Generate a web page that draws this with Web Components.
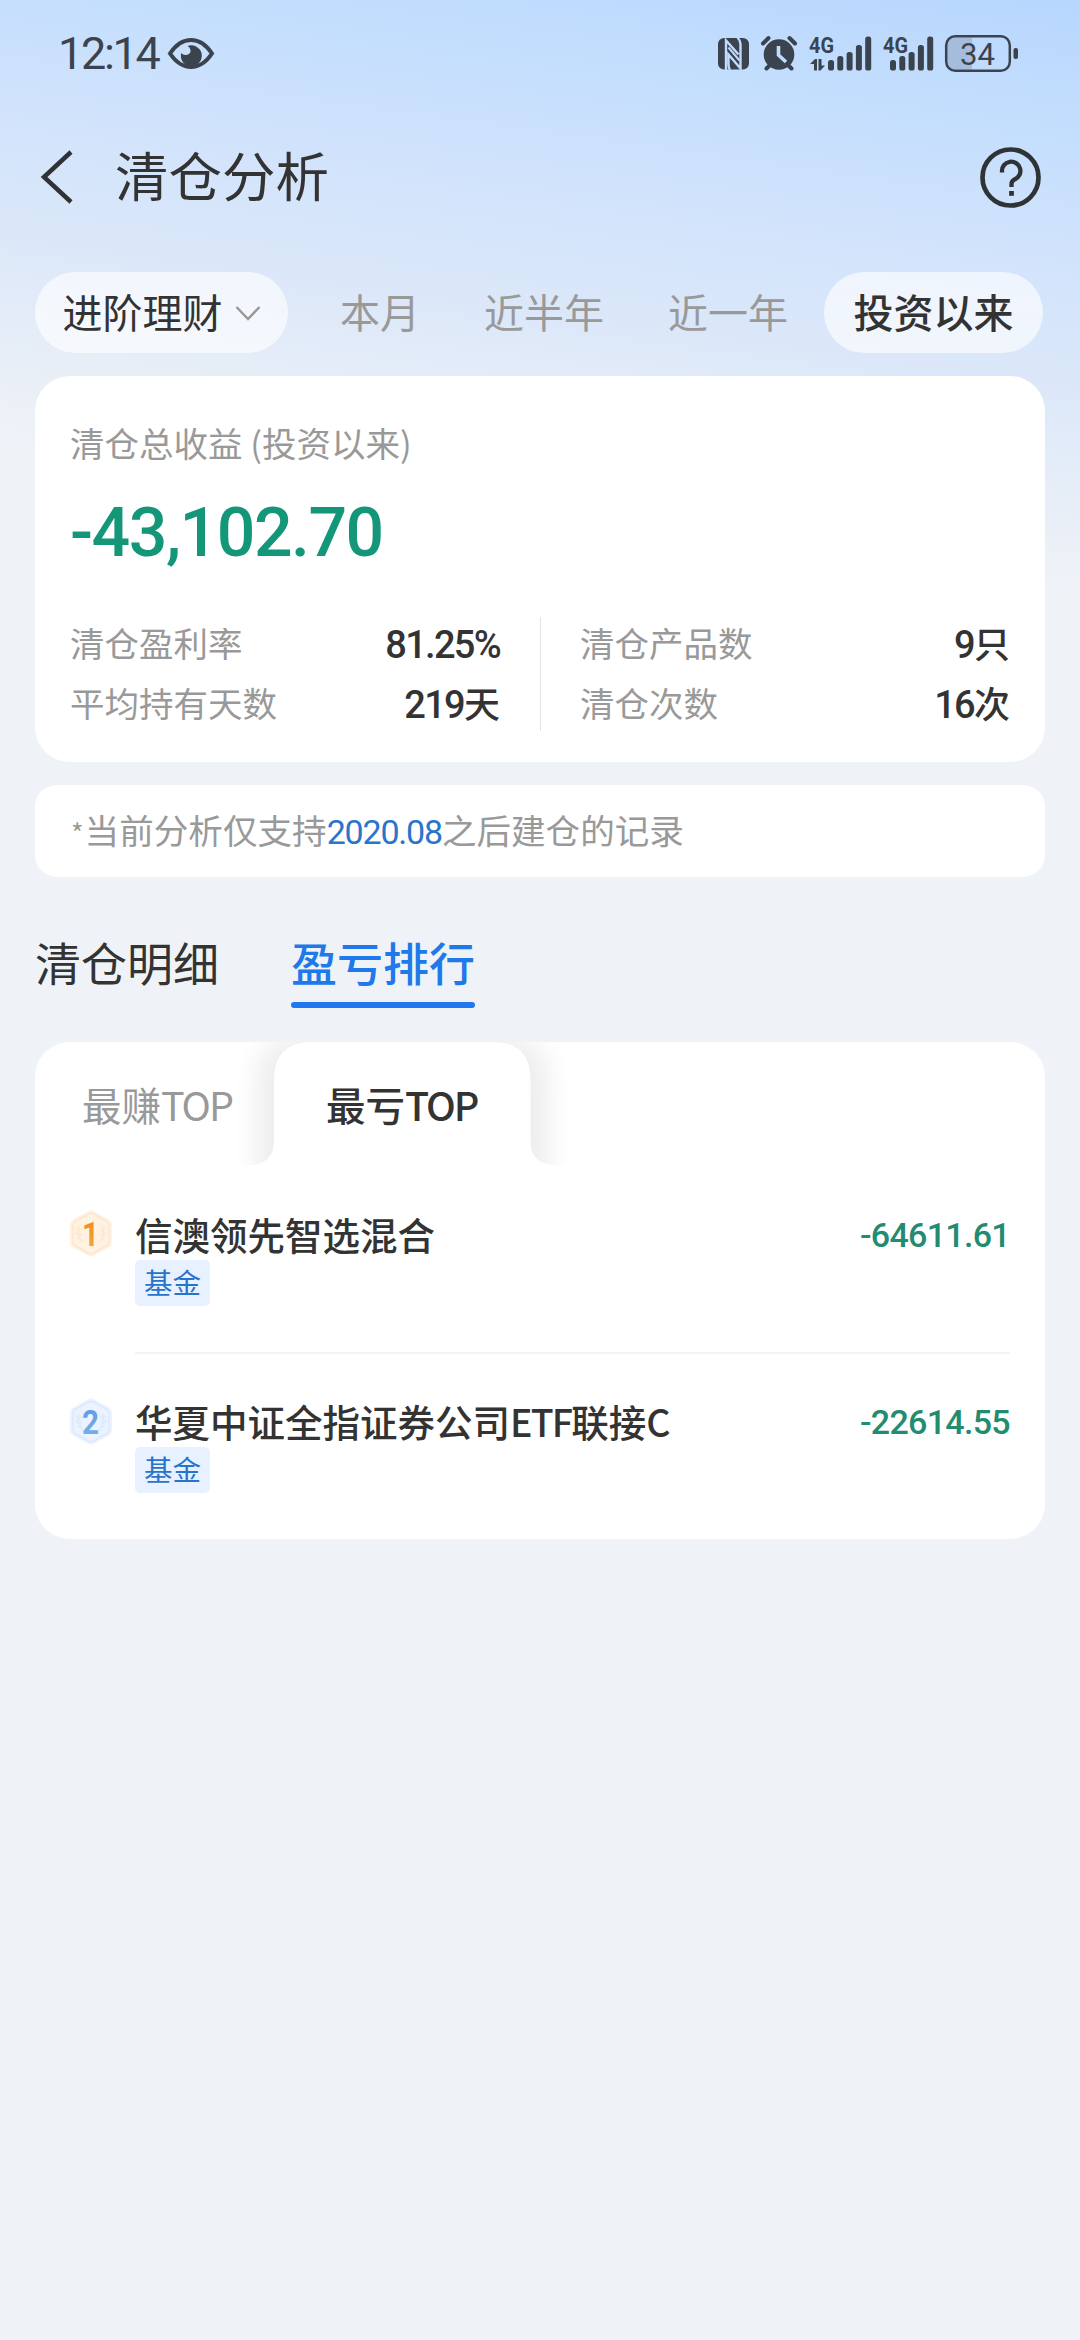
<!DOCTYPE html>
<html lang="zh-CN">
<head>
<meta charset="utf-8">
<title>清仓分析</title>
<style>
  html, body { margin: 0; padding: 0; }
  body { width: 1080px; height: 2340px; overflow: hidden; background: #eff3f8; }
</style>
</head>
<body>
<clearance-page></clearance-page>
<script>
const define = (name, css, html) => customElements.define(name, class extends HTMLElement {
  constructor() {
    super();
    const t = document.createElement('template');
    t.innerHTML = `<style>*{box-sizing:border-box}${css}</style>${typeof html === 'function' ? html(this) : html}`;
    this.attachShadow({ mode: 'open' }).append(t.content.cloneNode(true));
  }
});

const bars = (x) => [60, 56, 52, 45, 36.5].map((top, i) =>
  `<rect x="${x + i * 9.3}" y="${top}" width="6" height="${70.5 - top}" rx="2.6"/>`).join('');

define('status-bar', `
  :host{display:flex;height:108px;justify-content:space-between;color:#3b444e}
  .l{display:flex;padding-left:58px;align-items:center}
  .time{font:400 45px/60px Roboto,sans-serif;letter-spacing:-2.3px;width:109px;white-space:nowrap}
  svg{display:block;fill:currentColor}
  text{font-family:Roboto,sans-serif}`, `
  <div class="l"><span class="time">12:14</span>
    <svg width="48" height="108" viewBox="167 0 48 108">
      <path d="M170 53.500C182 35.500 200 35.500 212 53.500C200 71.500 182 71.500 170 53.500Z" fill="none" stroke="currentColor" stroke-width="4"/>
      <path d="M187.500 46A10.500 10.500 0 1 1 181.200 53Q183 55.500 186.500 55Q191 54 190.500 50Q190 47 187.500 46Z"/>
    </svg></div>
  <svg width="380" height="108" viewBox="700 0 380 108">
    <rect x="718" y="38" width="31" height="31.500" rx="6"/>
    <g stroke="#c1dbfd" stroke-width="2.400" fill="none">
      <path d="M726 70V40.500L738.500 54.500M737.500 37.500Q740 40 740.500 44V68.500L728.500 54.500V64Q728.500 68 730 70"/>
      <path d="M728.500 47.500L739.500 60.500" stroke-width="2"/>
    </g>
    <circle cx="779" cy="54.500" r="15.300"/>
    <path d="M763 43.500L768.500 38M795 43.500L789.500 38M766.500 68.500L770 65M791.500 68.500L788 65" stroke="currentColor" stroke-width="4" stroke-linecap="round"/>
    <path d="M778.500 46V55L786 62" fill="none" stroke="#c1dbfd" stroke-width="3.600"/>
    <text x="809" y="53" font-size="22" font-weight="700" textLength="25" lengthAdjust="spacingAndGlyphs">4G</text>
    <path d="M810 64L815 59H817V70.500H814V64ZM818.500 59H821.500V65.500H825L820.500 70.500H818.500Z"/>
    ${bars(828)}
    <text x="883" y="53" font-size="22" font-weight="700" textLength="25" lengthAdjust="spacingAndGlyphs">4G</text>
    ${bars(890)}
    <path d="M955 37.500H972V69.500H955Q947 69.500 947 61V46Q947 37.500 955 37.500Z" fill="#a5bcdc"/>
    <rect x="946.200" y="36.200" width="63.600" height="34.600" rx="9" fill="none" stroke="currentColor" stroke-width="2.500"/>
    <rect x="1013.500" y="48" width="4.500" height="11" rx="2"/>
    <text x="960" y="64.700" font-size="32" textLength="35" lengthAdjust="spacingAndGlyphs">34</text>
  </svg>`);

define('nav-bar', `
  :host{display:flex;height:138px;padding:0 38px 0 40px;align-items:center;color:#333;font-size:53.500px}
  .t{flex:1;margin-left:40px;line-height:80px;padding-bottom:7px}
  svg{display:block}`, `
  <svg width="35" height="60" viewBox="0 0 35 60" fill="none" stroke="#303336" stroke-width="4.500"><path d="M31 5L4 30L31 55"/></svg>
  <span class="t"><slot></slot></span>
  <svg width="63" height="63" viewBox="0 0 63 63" fill="none" stroke="#303336"><circle cx="31.500" cy="31.500" r="28" stroke-width="4.700"/><path d="M23 26.500V25.500A9.200 9.200 0 1 1 35.500 33.500Q32.500 35 32.500 38V41" stroke-width="4.300"/><path d="M32.500 45V49.800" stroke-width="4.800"/></svg>`);

define('filter-chip', `
  :host{display:flex;height:81px;align-items:center;justify-content:center;border-radius:41px;font-size:40px;color:#999;gap:12px;white-space:nowrap;line-height:60px}
  span{padding-bottom:4px}
  :host([on]){background:rgba(255,255,255,.63);color:#333}
  :host([on]:not([menu])){font-weight:500}
  svg{display:none}:host([menu]) svg{display:block}`, `
  <span><slot></slot></span><svg width="26" height="18" viewBox="0 0 26 18" fill="none" stroke="#999" stroke-width="2.500"><path d="M1.500 3L13 15L24.500 3"/></svg>`);

define('x-card', `:host{display:block;background:#fff;border-radius:35px;margin:0 35px;overflow:hidden}`, `<slot></slot>`);

define('stat-row', `
  :host{display:flex;justify-content:space-between;height:59.500px;align-items:center;font-size:34.500px;color:#999}
  .v{display:block;color:#333;font-weight:500;font-size:36px;line-height:50px;white-space:nowrap}
  .n{font-family:Roboto,sans-serif;font-size:38px;line-height:1;letter-spacing:-1.700px}`,
  (el) => `<slot></slot><span class="v"><span class="n">${el.getAttribute('num')}</span>${el.getAttribute('unit') || ''}</span>`);

define('profit-summary', `
  :host{display:block;height:386px;padding:42.500px 35px 0;color:#999;font-size:34.500px}
  .cap{line-height:48px}
  .big{font:500 68px/80px Roboto,sans-serif;color:#149778;letter-spacing:-1.500px;margin-top:27px}
  .g{display:flex;margin-top:43.500px;height:114px}
  .c{flex:1;margin-top:-4px}.c:first-child{padding-right:40px}.c:last-child{padding-left:39px}
  .d{width:1px;height:114px;background:#e3e3e3}`, `
  <div class="cap">清仓总收益 (投资以来)</div>
  <div class="big">-43,102.70</div>
  <div class="g">
    <div class="c"><stat-row num="81.25%">清仓盈利率</stat-row><stat-row num="219" unit="天">平均持有天数</stat-row></div>
    <div class="d"></div>
    <div class="c"><stat-row num="9" unit="只">清仓产品数</stat-row><stat-row num="16" unit="次">清仓次数</stat-row></div>
  </div>`);

define('support-note', `
  :host{display:block;height:92px;padding-left:36px;font-size:34.600px;line-height:88px;color:#999;white-space:nowrap}
  b{font:400 34px/1 Roboto,sans-serif;color:#2b74cc;letter-spacing:-1.200px}
  i{font-style:normal;font-size:27px;line-height:1;letter-spacing:1px}`, `<i>*</i>当前分析仅支持<b>2020.08</b>之后建仓的记录`);

define('main-tab', `
  :host{display:flex;flex-direction:column;align-items:stretch;font-size:46px;line-height:70px;color:#333}
  .u{height:6px;border-radius:3px;margin-top:6px}
  :host([on]){color:#2079ea;font-weight:500}:host([on]) .u{background:#1f78ee}`, `<span><slot></slot></span><div class="u"></div>`);

define('rank-tabs', `
  :host{display:grid;grid-template-columns:238.500px 256.500px 1fr;height:123px;font-size:39.500px;line-height:123px;overflow:hidden;white-space:nowrap}
  .a{color:#999;padding-left:47px}
  .b{position:relative;color:#333;font-weight:500;text-align:center}
  .b svg{position:absolute;left:-60px;top:0;z-index:0}
  .b span,.a span{position:relative;z-index:1}
  em{font-style:normal;letter-spacing:-2px}`, `
  <div class="a"><span>最赚<em>TOP</em></span></div>
  <div class="b">
    <svg width="377" height="123" viewBox="0 0 377 123">
      <defs>
        <filter id="f" x="-20%" y="-20%" width="140%" height="140%"><feGaussianBlur stdDeviation="13"/></filter>
      </defs>
      <path d="M42 190V36Q44 -6 88 -6H289Q333 -6 335 36V190Z" fill="#000" opacity=".065" filter="url(#f)"/>
      <path d="M38 123Q60 121 60 99V38Q60 0 98 0H278.500Q316.500 0 316.500 38V99Q316.500 121 338.500 123Z" fill="#fff"/>
    </svg><span>最亏<em>TOP</em></span></div>
  <div></div>`);

const palette = {
  1: ['#fff2e2', '#fbe2c9', '#f5a742', '#ef8a1c'],
  2: ['#eaf3ff', '#d5e6fb', '#7fb2ee', '#5b97e2']
};
define('rank-item', `
  :host{display:flex;padding:0 35px;height:187.500px;gap:23px}
  svg{display:block;margin-top:21.500px;flex:none}
  .r{flex:1;height:165px;display:flex;flex-direction:column;border-bottom:2px solid #f4f4f5}
  :host([last]) .r{border:0}
  .top{display:flex;justify-content:space-between;height:71px;align-items:flex-end}
  .n{font-size:37.500px;line-height:52px;color:#333;font-weight:500}
  .m{font:500 34px/50px Roboto,sans-serif;color:#228b70;letter-spacing:-.7px}
  .g{align-self:flex-start;height:46px;width:75px;border-radius:5px;background:#e7f1ff;color:#2874cc;font-size:28.500px;line-height:43px;text-align:center}
  text{font-family:Roboto,sans-serif;font-weight:700}`,
  (el) => { const r = el.getAttribute('rank'), p = palette[r]; return `
  <svg width="42" height="47" viewBox="0 0 42 47">
    <defs><linearGradient id="g" x1="0" y1="0" x2="0" y2="1"><stop stop-color="${p[3]}"/><stop offset="1" stop-color="${p[2]}"/></linearGradient></defs>
    <path d="M17.500 1.500Q21 -.5 24.500 1.500L39 9.500Q42 11.500 42 15V32Q42 35.500 39 37.500L24.500 45.500Q21 47.500 17.500 45.500L3 37.500Q0 35.500 0 32V15Q0 11.500 3 9.500Z" fill="${p[0]}"/>
    <path d="M18.500 4Q21 2.800 23.500 4L37 11.500Q39 13 39 15.500V31.500Q39 34 37 35.500L23.500 43Q21 44.200 18.500 43L5 35.500Q3 34 3 31.500V15.500Q3 13 5 11.500Z" fill="none" stroke="${p[1]}" stroke-width="1.100"/>
    <g fill="none" stroke="${p[1]}" stroke-width="1.200" stroke-linecap="round" opacity=".8"><path d="M12.500 31.500Q7 26 9 16M8 20L6.500 18M8 25L6 23M10 29L7.500 28M9.500 21L11.500 18.500M9.500 26L11.500 23.500"/><path d="M29.500 31.500Q35 26 33 16M34 20L35.500 18M34 25L36 23M32 29L34.500 28M32.500 21L30.500 18.500M32.500 26L30.500 23.500"/></g>
    <text x="20.500" y="36" font-size="34" text-anchor="middle" textLength="17" lengthAdjust="spacingAndGlyphs" fill="url(#g)">${r}</text>
  </svg>
  <div class="r"><div class="top"><span class="n"><slot></slot></span><span class="m">${el.getAttribute('amount')}</span></div><span class="g">基金</span></div>`; });

define('clearance-page', `
  :host{display:block;width:1080px;height:2340px;font-family:"Noto Sans CJK SC",sans-serif;font-weight:400;
    background:linear-gradient(188deg,#b8d7fe 0%,#c5dffd 20%,#cfe2fc 32%,#dce8f9 53%,#ebf0f7 73%,#eff3f8 80%) 0 0/1080px 590px no-repeat #eff3f8}
  .f{display:grid;grid-template-columns:253px 184px 144px 224px 218.500px;padding:26px 0 22.500px 35px}
  .f filter-chip:last-child{margin-left:-16px}
  .tabs{display:flex;gap:72px;padding:49px 35px 34px}
  em{font-style:normal;letter-spacing:-1.800px}`, `
  <status-bar></status-bar>
  <nav-bar>清仓分析</nav-bar>
  <div class="f">
    <filter-chip on menu>进阶理财</filter-chip><filter-chip>本月</filter-chip><filter-chip>近半年</filter-chip><filter-chip>近一年</filter-chip><filter-chip on style="width:219px">投资以来</filter-chip>
  </div>
  <x-card><profit-summary></profit-summary></x-card>
  <x-card style="border-radius:22px;margin-top:23px"><support-note></support-note></x-card>
  <div class="tabs"><main-tab>清仓明细</main-tab><main-tab on>盈亏排行</main-tab></div>
  <x-card style="height:497px">
    <rank-tabs></rank-tabs>
    <div style="height:24px"></div>
    <rank-item rank="1" amount="-64611.61">信澳领先智选混合</rank-item>
    <rank-item rank="2" amount="-22614.55" last>华夏中证全指证券公司<em>ETF</em>联接C</rank-item>
  </x-card>`);
</script>
</body>
</html>
